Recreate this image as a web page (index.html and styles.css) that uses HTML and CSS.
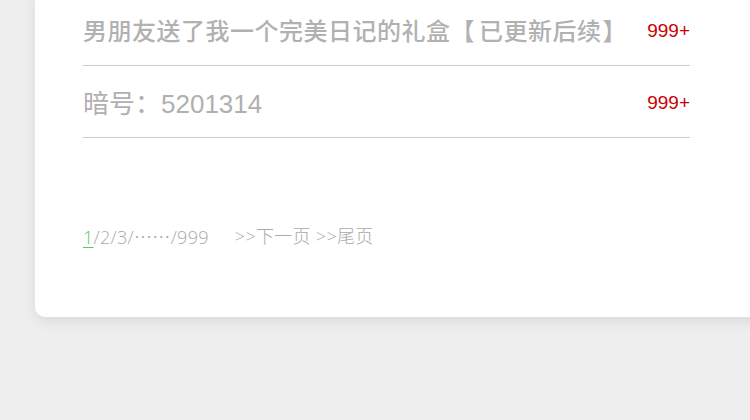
FILE: index.html
```html
<!DOCTYPE html>
<html lang="zh">
<head>
<meta charset="utf-8">
<link rel="stylesheet" href="styles.css">
</head>
<body>
<div class="card">
  <ul class="list">
    <li class="row">
      <span class="title">男朋友送了我一个完美日记的礼盒<span class="open">【</span>已更新后续<span class="close">】</span></span>
      <span class="count">999+</span>
    </li>
    <li class="row">
      <span class="title big">暗号：5201314</span>
      <span class="count">999+</span>
    </li>
  </ul>
  <div class="pager">
    <span class="pages"><a class="current">1</a>/2/3/<span class="dots">……</span>/999</span>
    <span class="nav">&gt;&gt;下一页 &gt;&gt;尾页</span>
  </div>
</div>
</body>
</html>
```
FILE: styles.css
```css
html, body {
  margin: 0;
  padding: 0;
  background: #eeeeee;
  overflow: hidden;
  height: 420px;
}
.card {
  margin: -6px 0 0 35px;
  width: 760px;
  background: #ffffff;
  border-radius: 0 0 10px 10px;
  box-shadow: 0 4px 14px rgba(0, 0, 0, 0.09);
  padding: 0 0 68px 48px;
  box-sizing: border-box;
}
.list {
  list-style: none;
  margin: 0;
  padding: 0;
  width: 607px;
}
.row {
  height: 71px;
  border-bottom: 1px solid #cccccc;
  display: flex;
  align-items: center;
  justify-content: space-between;
}
.title {
  font-family: "Liberation Sans", "Noto Sans CJK SC", sans-serif;
  font-size: 24px;
  font-weight: 500;
  color: #b1b1b1;
  letter-spacing: 0.5px;
}
.open {
  margin-right: 4px;
}
.close {
  margin-left: 1px;
}
.title.big {
  font-size: 26px;
  font-weight: 400;
  letter-spacing: 0;
  color: #b0b0b0;
}
.count {
  font-family: "Liberation Sans", "Noto Sans CJK SC", sans-serif;
  font-size: 19px;
  color: #cc0000;
  padding-top: 2px;
}
.pager {
  margin-top: 86px;
  font-family: "Open Sans", "Noto Sans CJK SC", sans-serif;
  font-weight: 300;
  font-size: 18px;
  line-height: 24px;
  letter-spacing: 0.3px;
  color: #aaaaaa;
  display: flex;
  gap: 26px;
}
.dots {
  font-family: "Noto Sans CJK SC", sans-serif;
}
.current {
  color: #5cc66a;
  text-decoration: underline;
  text-underline-offset: 3px;
}
```
